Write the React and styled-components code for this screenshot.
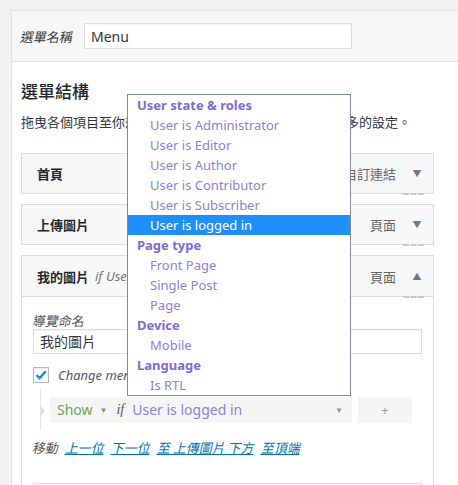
import styled, { createGlobalStyle, css } from "styled-components";

const GlobalStyle = createGlobalStyle`
  html, body {
    margin: 0;
    padding: 0;
    background: #f1f1f1;
  }
  body {
    font-family: "Noto Sans CJK TC", "Noto Sans", sans-serif;
    color: #23282d;
  }
`;

// CJK font has no italic face, so slant it by hand
const slant = css`
  display: inline-block;
  transform: skewX(-13deg);
`;

const Screen = styled.div`
  position: relative;
  width: 458px;
  height: 485px;
  overflow: hidden;
  padding: 10px 0 0 11px;
  box-sizing: border-box;
`;

const Panel = styled.div`
  background: #fff;
  border-left: 1px solid #e2e2e2;
  border-top: 1px solid #e2e2e2;
  height: 100%;
  box-sizing: border-box;
`;

const PanelHeader = styled.div`
  display: flex;
  align-items: center;
  gap: 11px;
  height: 50px;
  padding-left: 9px;
  background: #f7f7f7;
  border-bottom: 1px solid #dedede;
`;

const Label = styled.span`
  ${slant};
  font-size: 13px;
  color: #32373c;
`;

const TextInput = styled.div`
  box-sizing: border-box;
  width: ${(p) => p.$width || "268px"};
  height: 26px;
  display: flex;
  align-items: center;
  padding: 0 6px;
  background: #fff;
  border: 1px solid #dddddd;
  box-shadow: inset 0 1px 2px rgba(0, 0, 0, 0.05);
  font-family: "Noto Sans", "Noto Sans CJK TC", sans-serif;
  font-size: 14px;
  color: #32373c;
`;

const Body = styled.div`
  padding: 17px 0 0 9px;
`;

const Heading = styled.h2`
  margin: 0;
  font-size: 17px;
  line-height: 24px;
  font-weight: 500;
  color: #23282d;
`;

const Description = styled.p`
  margin: 9px 0 21px;
  font-size: 13px;
  line-height: 20px;
  white-space: nowrap;
  color: #32373c;
`;

const ItemList = styled.div`
  display: flex;
  flex-direction: column;
  gap: 10px;
  width: 413px;
`;

const Item = styled.div`
  display: flex;
  flex-direction: column;
`;

const ItemHead = styled.div`
  position: relative;
  box-sizing: border-box;
  height: ${(p) => (p.$open ? "42px" : "41px")};
  display: flex;
  align-items: center;
  padding: 0 5px 0 15px;
  background: #f6f7f7;
  border: 1px solid #dcdcde;
  font-size: 13px;
`;

const ItemTitle = styled.span`
  font-weight: 700;
  color: #23282d;
`;

const ItemNote = styled.span`
  margin-left: 6px;
  font-family: "Noto Sans", sans-serif;
  font-style: italic;
  font-size: 13px;
  color: #72777c;
`;

const ItemType = styled.span`
  margin-left: auto;
  color: #666;
`;

const Toggle = styled.span`
  width: 22px;
  margin-left: 10px;
  text-align: center;
  font-size: 9px;
  color: #72777c;
`;

const Dashes = styled.span`
  position: absolute;
  right: 9px;
  bottom: -2px;
  width: 21px;
  border-top: 2px dashed #c8c8c8;
`;

const ItemBody = styled.div`
  display: flex;
  flex-direction: column;
  align-items: flex-start;
  padding: 15px 11px 0 11px;
  border: 1px solid #dcdcde;
  border-top: none;
  height: 200px;
`;

const FieldLabel = styled.span`
  ${slant};
  font-size: 13px;
  line-height: 17px;
  color: #555;
`;

const CheckRow = styled.div`
  display: flex;
  align-items: center;
  gap: 9px;
  height: 16px;
  margin-top: 13px;
`;

const Checkbox = styled.span`
  box-sizing: border-box;
  width: 16px;
  height: 16px;
  display: flex;
  align-items: center;
  justify-content: center;
  border: 1px solid #b4b9be;
  background: #fff;
  box-shadow: inset 0 1px 2px rgba(0, 0, 0, 0.1);
`;

const CheckLabel = styled.span`
  font-family: "Noto Sans", sans-serif;
  font-style: italic;
  font-size: 13px;
  color: #555;
`;

const Condition = styled.div`
  position: relative;
  display: flex;
  gap: 6px;
  margin: 6px 0 0 7px;
  padding: 8px 0 7px 9px;
  border-left: 1px solid #e4e4e4;

  &::before {
    content: "";
    position: absolute;
    left: 0;
    top: 17px;
    border-style: solid;
    border-width: 5px 0 5px 4px;
    border-color: transparent transparent transparent #e0e0e0;
  }
`;

const Rule = styled.div`
  display: flex;
  align-items: center;
  width: 302px;
  height: 26px;
  padding: 0 9px 0 7px;
  box-sizing: border-box;
  background: #f5f5f5;
  font-family: "Noto Sans", sans-serif;
  font-size: 14px;
`;

const Show = styled.span`
  color: #6aa84f;
`;

const Caret = styled.span`
  margin-left: ${(p) => (p.$auto ? "auto" : "7px")};
  font-size: 8px;
  color: ${(p) => p.$color};
`;

const If = styled.span`
  margin: 0 8px 0 9px;
  font-family: "Liberation Serif", serif;
  font-style: italic;
  color: #555;
`;

const Value = styled.span`
  color: #8c84d2;
`;

const AddButton = styled.div`
  width: 54px;
  height: 26px;
  display: flex;
  align-items: center;
  justify-content: center;
  background: #f5f5f5;
  font-family: "Noto Sans", sans-serif;
  font-size: 13px;
  color: #8aa0b8;
`;

const MoveRow = styled.div`
  display: flex;
  gap: 7px;
  margin-top: 8px;
  font-size: 13px;
  color: #555;
`;

const MoveText = styled.span`
  ${slant};
`;

const MoveLink = styled.a`
  ${slant};
  color: #0073aa;
  text-decoration: underline;
`;

const LastBox = styled.div`
  align-self: stretch;
  margin-top: 26px;
  height: 30px;
  border: 1px solid #dddddd;
  border-bottom: none;
`;

const Dropdown = styled.div`
  position: absolute;
  left: 127px;
  top: 94px;
  width: 224px;
  box-sizing: border-box;
  display: flex;
  flex-direction: column;
  background: #fff;
  border: 1px solid #7f8c99;
  font-family: "Noto Sans", sans-serif;
  font-size: 13px;
`;

const Group = styled.div`
  height: 20px;
  line-height: 20px;
  padding-left: 9px;
  font-weight: 700;
  color: #7c6cd3;
`;

const Option = styled.div`
  height: 20px;
  line-height: 20px;
  padding-left: 22px;
  color: ${(p) => (p.$active ? "#fff" : "#8a83cf")};
  background: ${(p) => (p.$active ? "#1e8ff7" : "transparent")};
`;

const groups = [
  {
    name: "User state & roles",
    options: [
      "User is Administrator",
      "User is Editor",
      "User is Author",
      "User is Contributor",
      "User is Subscriber",
      "User is logged in",
    ],
  },
  { name: "Page type", options: ["Front Page", "Single Post", "Page"] },
  { name: "Device", options: ["Mobile"] },
  { name: "Language", options: ["Is RTL"] },
];

const items = [
  { title: "首頁", type: "自訂連結" },
  { title: "上傳圖片", type: "頁面" },
  { title: "我的圖片", type: "頁面", note: "if User is logged in", open: true },
];

const Check = () => (
  <svg width="14" height="14" viewBox="0 0 14 14">
    <path d="M2.5 7.2 L5.6 10.3 L11.8 3.2" fill="none" stroke="#1e8cbe" strokeWidth="2.4" />
  </svg>
);

export default function App() {
  return (
    <>
      <GlobalStyle />
      <Screen>
        <Panel>
          <PanelHeader>
            <Label>選單名稱</Label>
            <TextInput>Menu</TextInput>
          </PanelHeader>
          <Body>
            <Heading>選單結構</Heading>
            <Description>拖曳各個項目至你想要的順序，按一下右側的箭頭顯示更多的設定。</Description>
            <ItemList>
              {items.map((item) => (
                <Item key={item.title}>
                  <ItemHead $open={item.open}>
                    <ItemTitle>{item.title}</ItemTitle>
                    {item.note && <ItemNote>{item.note}</ItemNote>}
                    <ItemType>{item.type}</ItemType>
                    <Toggle>{item.open ? "▲" : "▼"}</Toggle>
                    <Dashes />
                  </ItemHead>
                  {item.open && (
                    <ItemBody>
                      <FieldLabel>導覽命名</FieldLabel>
                      <TextInput $width="389px">我的圖片</TextInput>
                      <CheckRow>
                        <Checkbox>
                          <Check />
                        </Checkbox>
                        <CheckLabel>Change menu item visibility</CheckLabel>
                      </CheckRow>
                      <Condition>
                        <Rule>
                          <Show>Show</Show>
                          <Caret $color="#6aa84f">▼</Caret>
                          <If>if</If>
                          <Value>User is logged in</Value>
                          <Caret $auto $color="#8c84d2">▼</Caret>
                        </Rule>
                        <AddButton>+</AddButton>
                      </Condition>
                      <MoveRow>
                        <MoveText>移動</MoveText>
                        <MoveLink>上一位</MoveLink>
                        <MoveLink>下一位</MoveLink>
                        <MoveLink>至 上傳圖片 下方</MoveLink>
                        <MoveLink>至頂端</MoveLink>
                      </MoveRow>
                      <LastBox />
                    </ItemBody>
                  )}
                </Item>
              ))}
            </ItemList>
          </Body>
        </Panel>
        <Dropdown>
          {groups.map((g) => (
            <div key={g.name}>
              <Group>{g.name}</Group>
              {g.options.map((o) => (
                <Option key={o} $active={o === "User is logged in"}>
                  {o}
                </Option>
              ))}
            </div>
          ))}
        </Dropdown>
      </Screen>
    </>
  );
}
